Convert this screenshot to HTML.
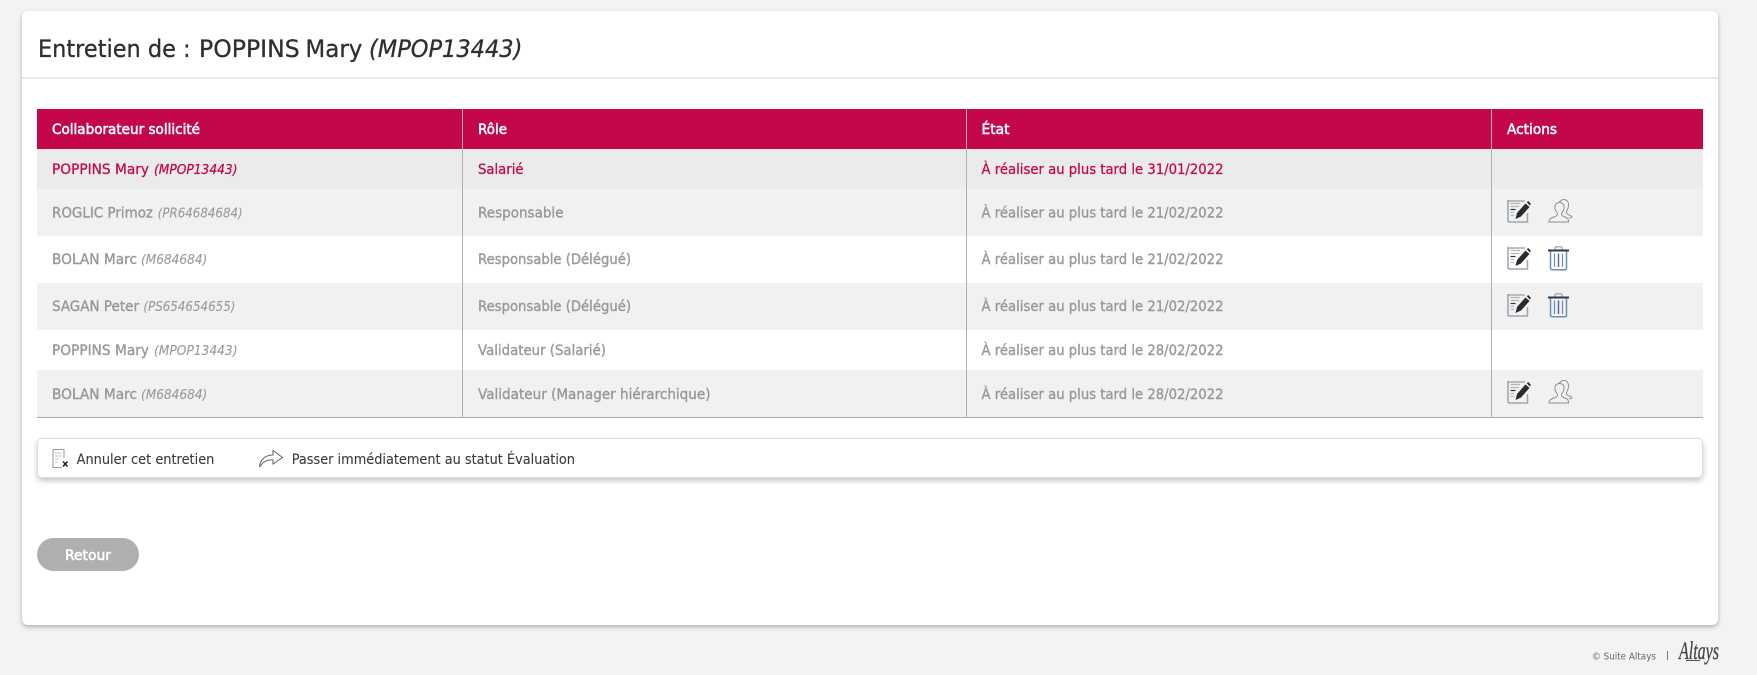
<!DOCTYPE html>
<html lang="fr"><head><meta charset="utf-8"><title>Entretien</title>
<style>
html,body{margin:0;padding:0;width:1757px;height:675px;overflow:hidden;background:#f3f3f3}
.a{position:absolute}
#card{left:22px;top:11px;width:1696px;height:614px;background:#fff;border-radius:6px;box-shadow:0 2px 5px rgba(0,0,0,.28)}
#box{left:37px;top:438px;width:1666px;height:40px;box-sizing:border-box;background:#fff;border:1px solid #ddd;border-radius:5px;box-shadow:0 3px 6px rgba(0,0,0,.22)}
svg{position:absolute;left:0;top:0}
text{font-family:"DejaVu Sans","Liberation Sans",sans-serif;font-size:14px;fill:#999;stroke:#999;stroke-width:.38px}
.h text{fill:#fff;stroke:#fff;stroke-width:.55px}
.c text{fill:#c4064a;stroke:#c4064a;stroke-width:.25px}
.k text{fill:#3a3a3a;stroke:#3a3a3a;stroke-width:.1px}
.i{font-style:italic;font-size:13.500px;stroke-width:.1px}
.t{font-size:24px;fill:#2f2f2f;stroke:#2f2f2f;stroke-width:.3px}
</style></head><body>
<div class="a" id="card"></div>
<div class="a" id="box"></div>
<svg width="1757" height="675" viewBox="0 0 1757 675">
<defs>
<g id="edit">
<path d="M1.500 2H18" fill="none" stroke="#aaa" stroke-width="1.600"/>
<path d="M1 1V21.500Q1 23 3 23" fill="none" stroke="#8a97a5" stroke-width="1.300"/>
<path d="M3 23H20.500V14" fill="none" stroke="#9aa7b5" stroke-width="1.500"/>
<path d="M3.500 4.500H13M3.500 7.500H12" stroke="#b5b5b5" stroke-width="1.200"/>
<path d="M3.500 10.500H8.500" stroke="#333" stroke-width="1.200"/><path d="M3.500 13.500H7M3.500 16.500H7" stroke="#bbb" stroke-width="1.200"/>
<path d="M8.500 20L10 14L18.500 4.500L22.500 8L14 17.500Z" fill="#2b2b2b"/>
<path d="M19.800 3.200L21.200 2L23.800 4.600L22.900 6.600Z" fill="#2b2b2b"/>
</g>
<g id="user" fill="none" stroke="#8f8b94" stroke-width="1">
<path d="M1 23C.8 20 3 19 6 18C8 17.300 9.500 16.500 9.500 15C9.500 14 8 12.500 7.300 10.500C6 6.500 8 3.500 11.500 3.500C15 3.500 17 6.500 15.700 10.500C15 12.500 13.500 14 13.500 15C13.500 16.500 15 17.300 17 18C19.500 19 20.800 20 20.500 23Z"/>
<path d="M11.500 3C12.500 1 15 .2 17 .7C20 1.500 21 4.500 20.300 8C19.800 10.500 18 12.500 18.500 14C19 15.500 22 16 23.700 17.300C24.200 18 23.500 18.600 21 19"/>
</g>
<g id="trash">
<path d="M7 3.500V2Q7 .8 8.500 .8H12.500Q14 .8 14 2V3.500" fill="none" stroke="#999" stroke-width="1.200"/>
<path d="M0 4.500H21" stroke="#2b3a4a" stroke-width="2"/>
<path d="M2.500 5.500V22Q2.500 23.800 4.500 23.800H16.500Q18.500 23.800 18.500 22V5.500" fill="none" stroke="#6f8fb0" stroke-width="1.500"/>
<path d="M6.500 7.500V21" stroke="#5b8fc5" stroke-width="1.200"/><path d="M14.500 7.500V21" stroke="#5b8fc5" stroke-width="1.200"/>
<path d="M10.500 7.500V21" stroke="#6a5a95" stroke-width="1.400"/>
</g>
</defs>
<path d="M22 78H1718" stroke="#e4e4e4" stroke-width="1.500"/>
<text class="t" x="38" y="57" textLength="152.600" lengthAdjust="spacingAndGlyphs">Entretien de :</text>
<text class="t" x="199" y="57" textLength="100.700" lengthAdjust="spacingAndGlyphs">POPPINS</text>
<text class="t" x="305.400" y="57" textLength="57" lengthAdjust="spacingAndGlyphs">Mary</text>
<text class="t" x="369" y="57" textLength="153.400" lengthAdjust="spacingAndGlyphs" style="font-style:italic">(MPOP13443)</text>

<rect x="37" y="109" width="1666" height="40" fill="#c4064a"/>
<rect x="37" y="149" width="1666" height="40" fill="#ebebeb"/>
<rect x="37" y="189" width="1666" height="47" fill="#f1f1f1"/>
<rect x="37" y="283" width="1666" height="47" fill="#f1f1f1"/>
<rect x="37" y="370" width="1666" height="47" fill="#f1f1f1"/>
<path d="M37 417.500H1703" stroke="#aaa" stroke-width="1"/>
<path d="M462.500 109V417M966.500 109V417M1491.500 109V417" stroke="#b0b0b0" stroke-width="1"/>

<g class="h">
<text x="52" y="134" textLength="148" lengthAdjust="spacingAndGlyphs">Collaborateur sollicité</text>
<text x="478" y="134" textLength="29" lengthAdjust="spacingAndGlyphs">Rôle</text>
<text x="981.500" y="134" textLength="28" lengthAdjust="spacingAndGlyphs">État</text>
<text x="1507" y="134" textLength="50" lengthAdjust="spacingAndGlyphs">Actions</text>
</g>

<g class="c">
<text x="52" y="174" textLength="97" lengthAdjust="spacingAndGlyphs">POPPINS Mary</text>
<text class="i" x="154" y="174" textLength="83.500" lengthAdjust="spacingAndGlyphs">(MPOP13443)</text>
<text x="478" y="174" textLength="45.500" lengthAdjust="spacingAndGlyphs">Salarié</text>
<text x="981.500" y="174" textLength="242" lengthAdjust="spacingAndGlyphs">À réaliser au plus tard le 31/01/2022</text>
</g>

<text x="52" y="217.500" textLength="101" lengthAdjust="spacingAndGlyphs">ROGLIC Primoz</text>
<text class="i" x="157.700" y="217.500" textLength="85" lengthAdjust="spacingAndGlyphs">(PR64684684)</text>
<text x="478" y="217.500" textLength="85.500" lengthAdjust="spacingAndGlyphs">Responsable</text>
<text x="981.500" y="217.500" textLength="242" lengthAdjust="spacingAndGlyphs">À réaliser au plus tard le 21/02/2022</text>

<text x="52" y="264" textLength="85" lengthAdjust="spacingAndGlyphs">BOLAN Marc</text>
<text class="i" x="141" y="264" textLength="66.300" lengthAdjust="spacingAndGlyphs">(M684684)</text>
<text x="478" y="264" textLength="153" lengthAdjust="spacingAndGlyphs">Responsable (Délégué)</text>
<text x="981.500" y="264" textLength="242" lengthAdjust="spacingAndGlyphs">À réaliser au plus tard le 21/02/2022</text>

<text x="52" y="311" textLength="87" lengthAdjust="spacingAndGlyphs">SAGAN Peter</text>
<text class="i" x="143.400" y="311" textLength="92" lengthAdjust="spacingAndGlyphs">(PS654654655)</text>
<text x="478" y="311" textLength="153" lengthAdjust="spacingAndGlyphs">Responsable (Délégué)</text>
<text x="981.500" y="311" textLength="242" lengthAdjust="spacingAndGlyphs">À réaliser au plus tard le 21/02/2022</text>

<text x="52" y="355" textLength="97" lengthAdjust="spacingAndGlyphs">POPPINS Mary</text>
<text class="i" x="154" y="355" textLength="83.500" lengthAdjust="spacingAndGlyphs">(MPOP13443)</text>
<text x="478" y="355" textLength="128" lengthAdjust="spacingAndGlyphs">Validateur (Salarié)</text>
<text x="981.500" y="355" textLength="242" lengthAdjust="spacingAndGlyphs">À réaliser au plus tard le 28/02/2022</text>

<text x="52" y="399" textLength="85" lengthAdjust="spacingAndGlyphs">BOLAN Marc</text>
<text class="i" x="141" y="399" textLength="66.300" lengthAdjust="spacingAndGlyphs">(M684684)</text>
<text x="478" y="399" textLength="232.500" lengthAdjust="spacingAndGlyphs">Validateur (Manager hiérarchique)</text>
<text x="981.500" y="399" textLength="242" lengthAdjust="spacingAndGlyphs">À réaliser au plus tard le 28/02/2022</text>

<use href="#edit" x="1507" y="199"/><use href="#user" x="1548" y="199"/>
<use href="#edit" x="1507" y="246"/><use href="#trash" x="1548" y="246"/>
<use href="#edit" x="1507" y="293"/><use href="#trash" x="1548" y="293"/>
<use href="#edit" x="1507" y="380"/><use href="#user" x="1548" y="380"/>

<g fill="none" stroke="#999" stroke-width="1">
<path d="M53 449.500H64V458M53 449.500V467.500H62"/>
<path d="M55 453H62M55 456H62M55 459H59M55 462H58" stroke="#c5c5c5"/>
</g>
<path d="M63 461.500L67.500 466.500M67.500 461.500L63 466.500" stroke="#222" stroke-width="1.600"/>
<g class="k">
<text x="76.600" y="464" textLength="137.800" lengthAdjust="spacingAndGlyphs">Annuler cet entretien</text>
<text x="291.700" y="464" textLength="283.300" lengthAdjust="spacingAndGlyphs">Passer immédiatement au statut Évaluation</text>
</g>
<path d="M259.500 467C260 460 265 455 273 455V450.500L282.500 457.500L273 464V460C268 459.500 263 461.500 259.500 467Z" fill="none" stroke="#666" stroke-width="1"/>

<rect x="37" y="538" width="102" height="33" rx="16.500" fill="#b0aeae"/>
<text x="65" y="560" textLength="46" lengthAdjust="spacingAndGlyphs" style="fill:#fff;stroke:#fff;stroke-width:.55px">Retour</text>

<text x="1592" y="659.500" textLength="64" lengthAdjust="spacingAndGlyphs" style="font-size:9.500px;fill:#666;stroke:none">© Suite Altays</text>
<path d="M1667.500 651V660" stroke="#8a6a7a" stroke-width="1"/>
<text x="1679" y="659" textLength="40" lengthAdjust="spacingAndGlyphs" style="font-family:'Liberation Serif',serif;font-style:italic;font-size:25px;fill:#444;stroke:#444;stroke-width:.3px">Altays</text>
<path d="M1686 660.500H1700" stroke="#555" stroke-width="1"/>
</svg>
</body></html>
